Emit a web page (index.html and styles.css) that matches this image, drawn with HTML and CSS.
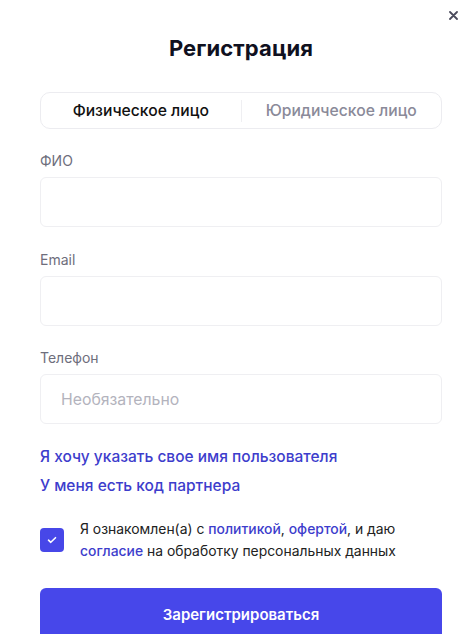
FILE: index.html
```html
<!DOCTYPE html>
<html lang="ru">
<head>
<meta charset="utf-8">
<title>Регистрация</title>
<link rel="stylesheet" href="styles.css">
</head>
<body>
<div class="modal">
  <button class="close" aria-label="Закрыть">
    <svg width="9" height="9" viewBox="0 0 9 9"><path d="M1 1L8 8M8 1L1 8" stroke="#4b4b5c" stroke-width="1.8" stroke-linecap="round"/></svg>
  </button>
  <h1 class="title">Регистрация</h1>
  <div class="tabs">
    <div class="tab active">Физическое лицо</div>
    <div class="sep"></div>
    <div class="tab">Юридическое лицо</div>
  </div>
  <div class="field">
    <label class="label">ФИО</label>
    <div class="input"></div>
  </div>
  <div class="field">
    <label class="label">Email</label>
    <div class="input"></div>
  </div>
  <div class="field">
    <label class="label">Телефон</label>
    <div class="input placeholder">Необязательно</div>
  </div>
  <div class="links">
    <a class="link">Я хочу указать свое имя пользователя</a>
    <a class="link">У меня есть код партнера</a>
  </div>
  <div class="agree">
    <div class="check">
      <svg width="10" height="8" viewBox="0 0 10 8"><path d="M1.5 4.2L3.8 6.3L8.5 1.7" fill="none" stroke="#fff" stroke-width="1.6" stroke-linecap="round" stroke-linejoin="round"/></svg>
    </div>
    <p class="agree-text">Я ознакомлен(а) с <a class="inl">политикой</a>, <a class="inl">офертой</a>, и даю <a class="inl">согласие</a> на обработку персональных данных</p>
  </div>
  <button class="submit">Зарегистрироваться</button>
</div>
</body>
</html>
```
FILE: styles.css
```css
* { box-sizing: border-box; }
html, body { margin: 0; padding: 0; background: #fff; }
body { font-family: Inter, "Noto Sans", sans-serif; color: #141422; overflow: hidden; }
.modal { position: relative; padding: 33px 32px 0 40px; width: 474px; }
.close { position: absolute; top: 11px; left: 449px; border: 0; background: none; padding: 0; width: 10px; height: 10px; display: flex; }
.title { margin: 0; text-align: center; font-size: 22px; font-weight: 700; line-height: 30px; color: #0f1020; letter-spacing: 0.1px; }
.tabs { margin-top: 29px; height: 37px; border: 1px solid #ececf0; border-radius: 10px; display: flex; align-items: center; }
.tab { flex: 1; text-align: center; font-size: 15.7px; font-weight: 500; color: #8a8a99; }
.tab.active { color: #111; }
.sep { width: 1px; height: 22px; background: #efeff2; }
.field { margin-top: 23px; }
.field + .field { margin-top: 23.5px; }
.label { display: block; font-size: 14px; color: #6e6e7c; line-height: 18px; margin-bottom: 7px; }
.input { height: 50px; border: 1px solid #efeff2; border-radius: 6px; display: flex; align-items: center; padding-left: 20px; }
.placeholder { font-size: 15.8px; color: #b3b3bd; }
.links { margin-top: 23px; display: flex; flex-direction: column; gap: 9px; }
.link { font-size: 15.5px; font-weight: 500; color: #3d3dcc; line-height: 20px; }
.agree { margin-top: 22px; display: flex; align-items: center; gap: 16px; }
.check { width: 24px; height: 24px; border-radius: 4px; background: #4747e8; display: flex; align-items: center; justify-content: center; flex: none; }
.agree-text { margin: 0; font-size: 13.9px; line-height: 22px; color: #222; }
.inl { color: #3d3dcc; font-weight: 500; }
.submit { margin-top: 26px; width: 100%; height: 52px; background: #4747ea; color: #fff; border: 0; border-radius: 6px; font-family: inherit; font-size: 15px; font-weight: 600; }
```
